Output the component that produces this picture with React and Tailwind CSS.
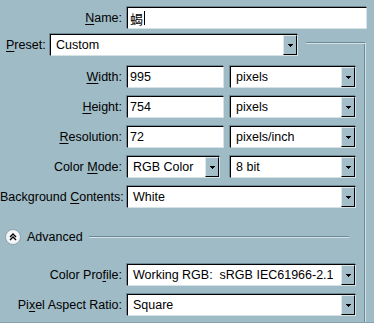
const LIGHT = '#d5e3e9';

const Mn = ({ pre = '', u, post = '' }) => (
  <span>
    {pre}
    <span className="underline underline-offset-[2px]">{u}</span>
    {post}
  </span>
);

const Arrow = () => (
  <svg width="5" height="3" shapeRendering="crispEdges">
    <rect x="0" y="0" width="5" height="1" fill="#000" />
    <rect x="1" y="1" width="3" height="1" fill="#000" />
    <rect x="2" y="2" width="1" height="1" fill="#000" />
  </svg>
);

const Edit = ({ w, children }) => (
  <div
    className={`${w} h-[22px] bg-white flex items-center pl-[2px] border-t border-l border-black border-b border-r border-b-[#d5e3e9] border-r-[#d5e3e9] shadow-[-1px_-1px_0_#6f8b98]`}
  >
    {children}
  </div>
);

const Combo = ({ w, value }) => (
  <div
    className={`${w} h-[22px] bg-white flex border-t border-l border-black border-b border-r border-b-[#d5e3e9] border-r-[#d5e3e9] shadow-[-1px_-1px_0_#6f8b98]`}
  >
    <div className="flex-1 flex items-center pl-[5px] whitespace-pre">{value}</div>
    <div className="w-[14px] h-full bg-[#a3bdc9] flex items-center justify-center border-t border-l border-[#dbe8ee] border-r border-b border-r-black border-b-black">
      <Arrow />
    </div>
  </div>
);

const Row = ({ label, children, className = '' }) => (
  <div className={`flex items-center h-[22px] ${className}`}>
    <div className="w-[122px] shrink-0 text-right whitespace-nowrap">{label}</div>
    <div className="ml-[5px] flex gap-[6px]">{children}</div>
  </div>
);

const AdvancedIcon = () => (
  <svg width="16" height="16" viewBox="0 0 16 16">
    <circle cx="8" cy="8" r="7.5" fill="#f4f6f7" stroke="#8ea4ae" />
    <path d="M5 8 L8 5 L11 8 M5 11 L8 8 L11 11" fill="none" stroke="#000" strokeWidth="1.4" />
  </svg>
);

const App = () => {
  return (
    <div
      className="w-[374px] h-[323px] bg-[#9fbbc6] overflow-hidden text-[12.5px] text-black border-b border-[#86a2ae]"
      style={{ fontFamily: '"Liberation Sans", "Noto Sans CJK SC", sans-serif' }}
    >
      <div className="pt-[7px]">
        <Row label={<Mn u="N" post="ame:" />}>
          <Edit w="w-[240px]">
            <span className="leading-none text-[13px]" style={{ fontFamily: '"Noto Sans CJK SC", sans-serif' }}>蝎</span>
            <span className="w-px h-[14px] bg-black ml-[1px]" />
          </Edit>
        </Row>

        <div className="flex items-stretch h-[23px] mt-[5px] mr-[8px]">
          <div className="w-[50px] shrink-0 pl-[6px] flex items-center whitespace-nowrap">
            <Mn u="P" post="reset:" />
          </div>
          <Combo w="w-[248px]" value="Custom" />
          <div className="flex-1 ml-[8px] mt-[8px] border-t border-[#6d8996] border-r border-r-[#d5e3e9] shadow-[inset_0_1px_0_#d5e3e9,inset_-1px_0_0_#6d8996]" />
        </div>

        <div className="mr-[8px] border-r border-[#d5e3e9] shadow-[inset_-1px_0_0_#6d8996] pb-[10px]">
          <Row label={<Mn u="W" post="idth:" />} className="pt-[9px] h-[31px]">
            <Edit w="w-[97px]">995</Edit>
            <Combo w="w-[126px]" value="pixels" />
          </Row>
          <Row label={<Mn u="H" post="eight:" />} className="mt-[8px]">
            <Edit w="w-[97px]">754</Edit>
            <Combo w="w-[126px]" value="pixels" />
          </Row>
          <Row label={<Mn u="R" post="esolution:" />} className="mt-[8px]">
            <Edit w="w-[97px]">72</Edit>
            <Combo w="w-[126px]" value="pixels/inch" />
          </Row>
          <Row label={<Mn pre="Color " u="M" post="ode:" />} className="mt-[8px]">
            <Combo w="w-[93px]" value="RGB Color" />
            <Combo w="w-[126px] ml-[4px]" value="8 bit" />
          </Row>
          <Row label={<Mn pre="Background " u="C" post="ontents:" />} className="mt-[8px]">
            <Combo w="w-[229px]" value="White" />
          </Row>

          <div className="flex items-center h-[16px] mt-[21px] pl-[5px]">
            <AdvancedIcon />
            <span className="ml-[6px]">Advanced</span>
            <div className="flex-1 ml-[6px] mr-[16px] h-[2px] border-t border-[#6d8996] border-b border-b-[#d5e3e9]" />
          </div>

          <Row label={<Mn pre="Color Pro" u="f" post="ile:" />} className="mt-[19px]">
            <Combo w="w-[229px]" value="Working RGB:  sRGB IEC61966-2.1" />
          </Row>
          <Row label={<Mn pre="Pi" u="x" post="el Aspect Ratio:" />} className="mt-[8px]">
            <Combo w="w-[229px]" value="Square" />
          </Row>
        </div>
      </div>
    </div>
  );
};

export default App;
